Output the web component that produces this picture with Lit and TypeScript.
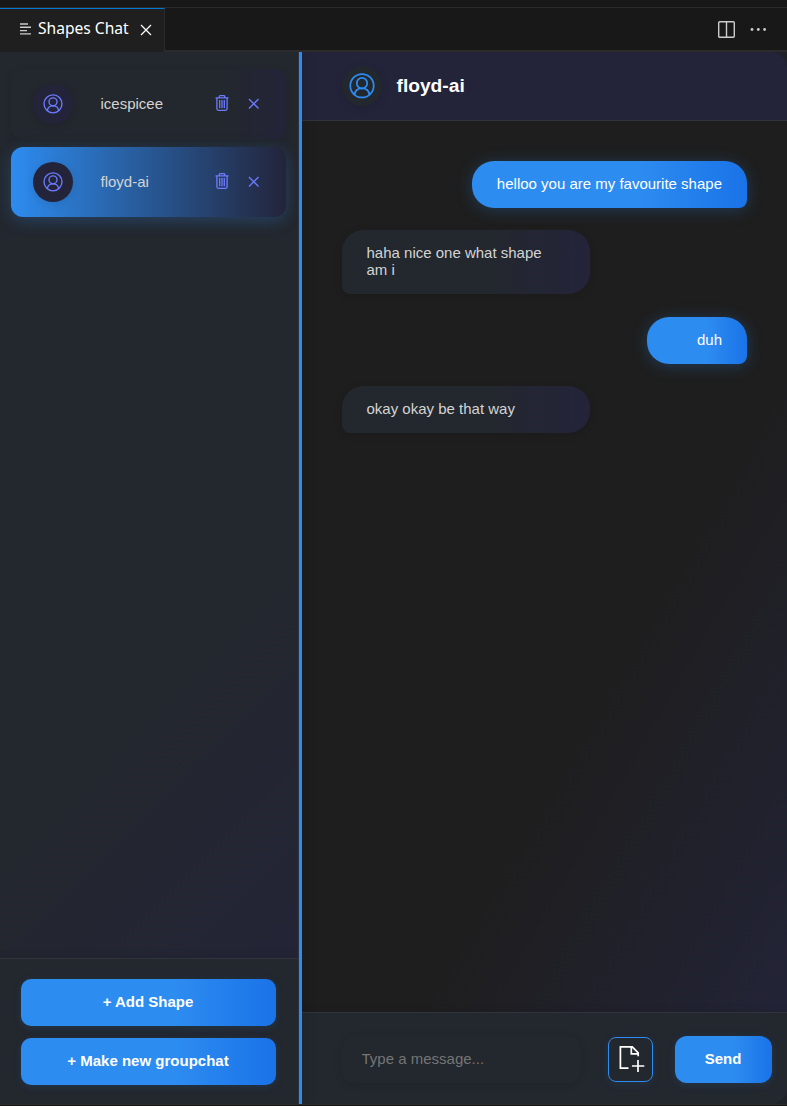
import { LitElement, html, svg, css } from 'lit';
import { customElement, state } from 'lit/decorators.js';

const person = svg`<svg class="person" viewBox="0 0 20 20" fill="none" stroke="currentColor" stroke-width="1.35">
  <circle cx="10" cy="9.8" r="9"/><circle cx="10" cy="7.8" r="4"/><path d="M4.3 16.9c.3-3.2 2.6-5.1 5.7-5.1s5.4 1.9 5.7 5.1"/></svg>`;
const trash = svg`<svg class="trash" viewBox="0 0 14 16" fill="none" stroke="currentColor" stroke-width="1.3">
  <path d="M.5 2.9h13M4.3 2.7V1.5q0-.8.8-.8h3.8q.8 0 .8.8v1.2M1.9 3v10.8q0 1.5 1.5 1.5h7.2q1.5 0 1.5-1.5V3M4.7 5v8.3M7 5v8.3M9.3 5v8.3"/></svg>`;
const cross = svg`<svg class="cross" viewBox="0 0 12 12" fill="none" stroke="currentColor" stroke-width="1.3"><path d="M1 1l10 10M11 1L1 11"/></svg>`;

@customElement('app-root')
export class AppRoot extends LitElement {
  @state() private active = 'floyd-ai';
  private shapes = ['icespicee', 'floyd-ai'];
  private messages = [
    { mine: true, text: 'helloo you are my favourite shape' },
    { mine: false, text: 'haha nice one what shape am i' },
    { mine: true, text: 'duh' },
    { mine: false, text: 'okay okay be that way' },
  ];

  static styles = css`
    :host { display: flex; flex-direction: column; height: 1106px; overflow: hidden; background: #181818; color: #d4d4d4; font: 15px/17px "Liberation Sans", Arial, sans-serif; }
    * { box-sizing: border-box; }
    svg { display: block; flex: none; }
    button { border: 0; padding: 0; background: none; color: inherit; font: inherit; }
    .top { height: 8px; flex: none; border-bottom: 1px solid #2b2b2b; }
    .tabs { height: 44px; flex: none; display: flex; }
    .tab { width: 165px; display: flex; align-items: center; padding: 0 12px 3px 20px; background: #1f1f1f; border-top: 1px solid #0078d4; border-right: 1px solid #2b2b2b; color: #fff; }
    .label { width: 91px; margin: 0 11.5px 2px 7px; white-space: nowrap; font: 15.6px/20px "Noto Sans", sans-serif; letter-spacing: 0; }
    .tab .cross { width: 12px; height: 12px; margin-top: 1px; }
    .tools { flex: 1; display: flex; align-items: center; justify-content: flex-end; gap: 15px; padding-right: 20px; border-bottom: 2px solid #2b2b2b; color: #ccc; }
    .body { height: 1052px; flex: none; display: flex; background: #1f2227; }
    .side { width: 299px; flex: none; display: flex; flex-direction: column; border-right: 1px solid #31333d; background: linear-gradient(135deg, #23272e 60%, #23243a 100%); }
    .list { flex: 1; padding: 17px 12px 0 11px; display: flex; flex-direction: column; gap: 8px; }
    .item { height: 70px; display: flex; align-items: center; padding: 0 27px 0 22px; border-radius: 12px; background: linear-gradient(90deg, #23272e 80%, #23243a 100%); box-shadow: 0 2px 8px rgba(0,0,0,.09); }
    .item.on { background: linear-gradient(90deg, #2d8cf0 0%, #23243a 100%); box-shadow: 0 4px 16px rgba(45,140,240,.27); }
    .avatar { width: 40px; height: 40px; flex: none; display: grid; place-items: center; border-radius: 50%; background: #23243a; color: #6c7bff; box-shadow: 0 2px 8px rgba(0,0,0,.1); }
    .person { width: 20px; height: 20px; }
    .name { flex: 1; margin-left: 27.5px; padding-bottom: 2px; }
    .item button { color: #6c7bff; }
    .trash { width: 14px; height: 16px; margin: 0 19px 2px 0; }
    .item .cross { width: 11.5px; height: 11.5px; }
    .actions { height: 146px; flex: none; padding: 20px 22px 0 21px; display: flex; flex-direction: column; gap: 12px; border-top: 1px solid #31333d; background: #23272e; box-shadow: 0 -2px 8px rgba(0,0,0,.08); }
    .primary { height: 47px; flex: none; padding: 0 1px 2px 0; border-radius: 10px; color: #fff; font-weight: bold; background: linear-gradient(90deg, #2d8cf0 60%, #1a73e8 100%); box-shadow: 0 2px 8px rgba(45,140,240,.14); }
    .split { position: relative; z-index: 1; width: 3px; flex: none; background: #2d8cf0; box-shadow: 3px 0 12px rgba(0,0,0,.22); clip-path: inset(0 -16px 0 0); }
    .chat { flex: 1; min-width: 0; display: flex; flex-direction: column; overflow: hidden; border-radius: 0 16px 16px 0; background: linear-gradient(120deg, #1e1e1e 60%, #23243a 100%); }
    .head { height: 69px; flex: none; display: flex; align-items: center; padding-left: 39.5px; border-bottom: 1px solid #31333d; background: #23243a; color: #fff; font-size: 19.2px; line-height: 22px; font-weight: bold; }
    .head .avatar { background: #23272e; color: #2d8cf0; margin-right: 15px; }
    .head .person { width: 26px; height: 26px; }
    .log { flex: 1; padding: 40px; display: flex; flex-direction: column; align-items: flex-start; gap: 22.4px; }
    .msg { flex: none; padding: 14px 25px 16px 24.5px; max-width: 248px; border-radius: 22px 22px 22px 8px; background: linear-gradient(90deg, #23272e 60%, #23243a 100%); box-shadow: 0 2px 8px rgba(0,0,0,.12); }
    .msg.theirs { width: 248px; }
    .msg.mine { align-self: flex-end; padding-left: 25px; max-width: 320px; min-width: 100px; text-align: right; color: #fff; border-radius: 22px 22px 8px 22px; background: linear-gradient(90deg, #2d8cf0 60%, #1a73e8 100%); box-shadow: 0 2px 16px rgba(45,140,240,.27); }
    .compose { height: 92px; flex: none; display: flex; align-items: center; padding: 1px 15px 0 40px; border-top: 1px solid #31333d; background: #23272e; box-shadow: 0 -2px 8px rgba(0,0,0,.08); }
    input { width: 239px; height: 47px; padding: 0 20px 2px 19.5px; border: 0; outline: 0; border-radius: 12px; background: #23272e; font: inherit; color: #d4d4d4; box-shadow: 0 2px 8px rgba(0,0,0,.1); }
    input::placeholder { color: #757575; opacity: 1; }
    .attach { width: 45px; height: 45px; margin: 0 22px 0 27px; padding-left: 2px; display: grid; place-items: center; border: 1px solid #2d8cf0; border-radius: 8px; color: #fff; box-shadow: 0 2px 8px rgba(45,140,240,.12); }
    .send { width: 97px; border-radius: 12px; }
    .foot { height: 2px; flex: none; border-top: 1px solid #2b2b2b; }
  `;

  render() {
    return html`
      <div class="top"></div>
      <div class="tabs">
        <div class="tab">
          <svg width="11" height="12" viewBox="0 0 11 12" stroke="#ccc" stroke-width="1.4"><path d="M0 1h8M0 4.3h11M0 7.6h7M0 10.9h11"/></svg>
          <span class="label">Shapes Chat</span>${cross}
        </div>
        <div class="tools">
          <svg width="17" height="17" viewBox="0 0 17 17" fill="none" stroke="currentColor" stroke-width="1.4"><rect x=".7" y=".7" width="15.6" height="15.6" rx="1"/><path d="M8.5.5v16"/></svg>
          <svg width="17" height="4" viewBox="0 0 17 4" fill="currentColor"><circle cx="2" cy="2.5" r="1.4"/><circle cx="8.3" cy="2.5" r="1.4"/><circle cx="14.6" cy="2.5" r="1.4"/></svg>
        </div>
      </div>
      <div class="body">
        <aside class="side">
          <div class="list">
            ${this.shapes.map(s => html`
              <div class="item ${s === this.active ? 'on' : ''}" @click=${() => (this.active = s)}>
                <div class="avatar">${person}</div><span class="name">${s}</span>
                <button aria-label="Clear chat">${trash}</button><button aria-label="Remove">${cross}</button>
              </div>`)}
          </div>
          <div class="actions">
            <button class="primary">+ Add Shape</button>
            <button class="primary">+ Make new groupchat</button>
          </div>
        </aside>
        <div class="split"></div>
        <main class="chat">
          <header class="head"><div class="avatar">${person}</div>${this.active}</header>
          <div class="log">${this.messages.map(m => html`<div class="msg ${m.mine ? 'mine' : 'theirs'}">${m.text}</div>`)}</div>
          <div class="compose">
            <input placeholder="Type a message...">
            <button class="attach" aria-label="Attach file">
              <svg width="27" height="28" viewBox="0 0 27 28" fill="none" stroke="currentColor" stroke-width="1.7"><path d="M10.5 23.2H2.4V1.9h11.9l5.9 5.9v3.5M13.3 1.9v6.9h6.9M20 14.9v12.2M13.9 21h12.4"/></svg>
            </button>
            <button class="primary send">Send</button>
          </div>
        </main>
      </div>
      <div class="foot"></div>`;
  }
}
